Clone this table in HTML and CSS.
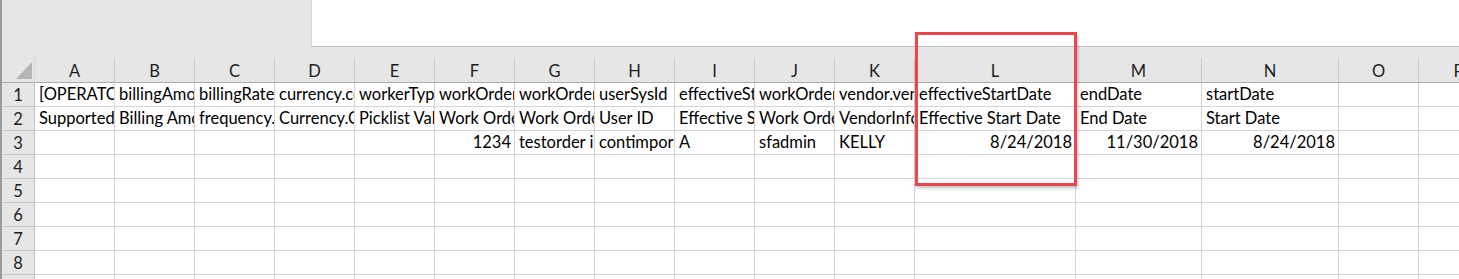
FILE: index.html
```html
<!DOCTYPE html>
<html>
<head>
<meta charset="utf-8">
<link rel="stylesheet" href="styles.css">
</head>
<body>
<div class="app">
  <div class="topbar">
    <div class="topbar-left"></div>
    <div class="topbar-box"></div>
  </div>
  <div class="sheet">
    <div class="corner"><span class="corner-tri"></span></div>
    <div class="colhead">A</div><div class="colhead">B</div><div class="colhead">C</div><div class="colhead">D</div><div class="colhead">E</div><div class="colhead">F</div><div class="colhead">G</div><div class="colhead">H</div><div class="colhead">I</div><div class="colhead">J</div><div class="colhead">K</div><div class="colhead">L</div><div class="colhead">M</div><div class="colhead">N</div><div class="colhead">O</div><div class="colhead">P</div>

    <div class="rowhead">1</div>
    <div class="cell">[OPERATOR]</div><div class="cell">billingAmount</div><div class="cell">billingRate</div><div class="cell">currency.code</div><div class="cell">workerType</div><div class="cell">workOrderId</div><div class="cell">workOrderName</div><div class="cell">userSysId</div><div class="cell">effectiveStartDate</div><div class="cell">workOrderOwner</div><div class="cell">vendor.vendorId</div><div class="cell">effectiveStartDate</div><div class="cell">endDate</div><div class="cell">startDate</div><div class="cell"></div><div class="cell"></div>

    <div class="rowhead">2</div>
    <div class="cell">Supported</div><div class="cell">Billing Amount</div><div class="cell">frequency.Frequency</div><div class="cell">Currency.Code</div><div class="cell">Picklist Value</div><div class="cell">Work Order ID</div><div class="cell">Work Order Name</div><div class="cell">User ID</div><div class="cell">Effective Start Date</div><div class="cell">Work Order Owner</div><div class="cell">VendorInfo</div><div class="cell">Effective Start Date</div><div class="cell">End Date</div><div class="cell">Start Date</div><div class="cell"></div><div class="cell"></div>

    <div class="rowhead">3</div>
    <div class="cell"></div><div class="cell"></div><div class="cell"></div><div class="cell"></div><div class="cell"></div><div class="cell num">1234</div><div class="cell">testorder info</div><div class="cell">contimporary</div><div class="cell">A</div><div class="cell">sfadmin</div><div class="cell">KELLY</div><div class="cell num">8/24/2018</div><div class="cell num">11/30/2018</div><div class="cell num">8/24/2018</div><div class="cell"></div><div class="cell"></div>

    <div class="rowhead">4</div>
    <div class="cell"></div><div class="cell"></div><div class="cell"></div><div class="cell"></div><div class="cell"></div><div class="cell"></div><div class="cell"></div><div class="cell"></div><div class="cell"></div><div class="cell"></div><div class="cell"></div><div class="cell"></div><div class="cell"></div><div class="cell"></div><div class="cell"></div><div class="cell"></div>

    <div class="rowhead">5</div>
    <div class="cell"></div><div class="cell"></div><div class="cell"></div><div class="cell"></div><div class="cell"></div><div class="cell"></div><div class="cell"></div><div class="cell"></div><div class="cell"></div><div class="cell"></div><div class="cell"></div><div class="cell"></div><div class="cell"></div><div class="cell"></div><div class="cell"></div><div class="cell"></div>

    <div class="rowhead">6</div>
    <div class="cell"></div><div class="cell"></div><div class="cell"></div><div class="cell"></div><div class="cell"></div><div class="cell"></div><div class="cell"></div><div class="cell"></div><div class="cell"></div><div class="cell"></div><div class="cell"></div><div class="cell"></div><div class="cell"></div><div class="cell"></div><div class="cell"></div><div class="cell"></div>

    <div class="rowhead">7</div>
    <div class="cell"></div><div class="cell"></div><div class="cell"></div><div class="cell"></div><div class="cell"></div><div class="cell"></div><div class="cell"></div><div class="cell"></div><div class="cell"></div><div class="cell"></div><div class="cell"></div><div class="cell"></div><div class="cell"></div><div class="cell"></div><div class="cell"></div><div class="cell"></div>

    <div class="rowhead">8</div>
    <div class="cell"></div><div class="cell"></div><div class="cell"></div><div class="cell"></div><div class="cell"></div><div class="cell"></div><div class="cell"></div><div class="cell"></div><div class="cell"></div><div class="cell"></div><div class="cell"></div><div class="cell"></div><div class="cell"></div><div class="cell"></div><div class="cell"></div><div class="cell"></div>

    <div class="rowhead">9</div>
    <div class="cell"></div><div class="cell"></div><div class="cell"></div><div class="cell"></div><div class="cell"></div><div class="cell"></div><div class="cell"></div><div class="cell"></div><div class="cell"></div><div class="cell"></div><div class="cell"></div><div class="cell"></div><div class="cell"></div><div class="cell"></div><div class="cell"></div><div class="cell"></div>
  </div>
  <div class="highlight"></div>
</div>
</body>
</html>
```
FILE: styles.css
```css
html, body {
  margin: 0;
  padding: 0;
  width: 1459px;
  height: 279px;
  overflow: hidden;
  background: #e6e6e6;
}

.app {
  position: relative;
  height: 279px;
  border-left: 2px solid #9a9a9a;
  font-family: Lato, "Liberation Sans", sans-serif;
  font-size: 16.5px;
  color: #000;
  overflow: hidden;
}

.topbar {
  display: flex;
  height: 47px;
  margin-bottom: 11px;
}

.topbar-left {
  width: 309px;
}

.topbar-box {
  flex: 1;
  background: #fff;
  border-left: 1px solid #d2d2d2;
  border-bottom: 1px solid #c2c2c2;
}

.sheet {
  display: grid;
  grid-template-columns: 33px repeat(11, 80px) 161px 126px 137px 80px 80px;
  grid-template-rows: 25px repeat(9, 24px);
  width: max-content;
}

.corner {
  position: relative;
  border-right: 1px solid #d8d8d8;
  border-bottom: 1px solid #ababab;
}

.corner-tri {
  position: absolute;
  right: 2px;
  bottom: 3px;
  width: 0;
  height: 0;
  border-left: 16px solid transparent;
  border-bottom: 17px solid #b5b5b5;
}

.colhead {
  display: flex;
  align-items: center;
  justify-content: center;
  border-right: 1px solid #c8c8c8;
  border-bottom: 1px solid #ababab;
  color: #1e1e1e;
  padding-top: 1px;
}

.rowhead {
  display: flex;
  align-items: center;
  justify-content: center;
  border-right: 1px solid #c0c0c0;
  border-bottom: 1px solid #c8c8c8;
  color: #1e1e1e;
}

.cell {
  background: #fff;
  border-right: 1px solid #d4d4d4;
  border-bottom: 1px solid #d4d4d4;
  white-space: nowrap;
  overflow: hidden;
  padding: 0 3px 0 4px;
  line-height: 22px;
}

.cell.num {
  text-align: right;
}

.highlight {
  position: absolute;
  left: 913px;
  top: 32px;
  width: 156px;
  height: 148px;
  border: 3px solid #ea484d;
  box-shadow: 1px 2px 3px rgba(0, 0, 0, 0.25);
}
```
